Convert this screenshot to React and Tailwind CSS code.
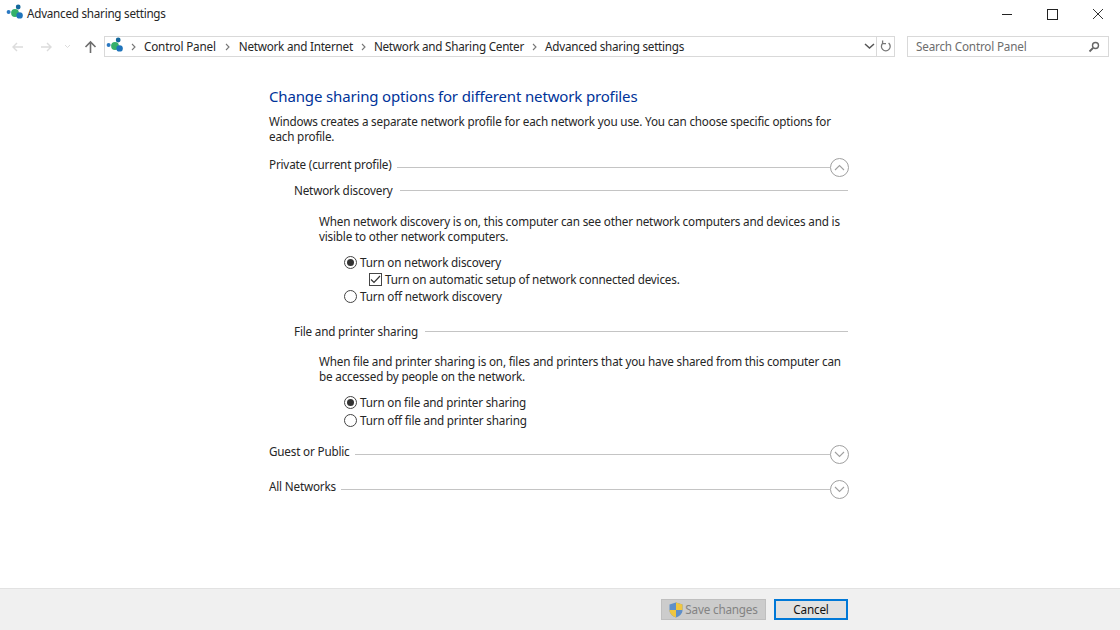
import React from "react";

const Net = ({ className = "" }) => (
  <svg width="18" height="16" viewBox="0 0 18 16" className={className}>
    <circle cx="2.6" cy="8" r="2" fill="#2a78c2" />
    <circle cx="9" cy="9" r="3.9" fill="#35b06a" />
    <circle cx="12.2" cy="3" r="2.4" fill="#14689c" />
    <circle cx="13.6" cy="11.4" r="3.2" fill="#1f74bb" />
  </svg>
);

const Chevron = ({ up }) => (
  <span className="w-[19px] h-[19px] shrink-0 rounded-full border border-[#a0a0a0] flex items-center justify-center bg-white">
    <svg width="11" height="7" viewBox="0 0 11 7">
      <path d={up ? "M1 6 L5.5 1.5 L10 6" : "M1 1 L5.5 5.5 L10 1"} stroke="#a0a0a0" strokeWidth="1.1" fill="none" />
    </svg>
  </span>
);

const Head = ({ children, up }) => (
  <div className="flex items-center h-[19px]">
    <span className="-mt-[7px] whitespace-nowrap">{children}</span>
    <span className="flex-1 h-px bg-[#c4c4c4] ml-[5px]" />
    <Chevron up={up} />
  </div>
);

const Sub = ({ children }) => (
  <div className="flex items-center h-[16px] ml-[25px]">
    <span className="whitespace-nowrap">{children}</span>
    <span className="flex-1 h-px bg-[#c4c4c4] ml-[7px] mr-px" />
  </div>
);

const Radio = ({ on, children, className = "" }) => (
  <div className={`flex items-center h-[17px] ml-[75px] ${className}`}>
    <span className="w-[13px] h-[13px] rounded-full border border-[#444] flex items-center justify-center mr-[3px] bg-white">
      {on && <span className="w-[7px] h-[7px] rounded-full bg-[#333]" />}
    </span>
    <span className="whitespace-nowrap">{children}</span>
  </div>
);

const Crumb = ({ children, className = "mx-[8px]" }) => (
  <>
    <svg width="5" height="8" viewBox="0 0 5 8" className={`shrink-0 ${className}`}>
      <path d="M1 1 L4 4 L1 7" stroke="#777" strokeWidth="1.1" fill="none" />
    </svg>
    <span className="whitespace-nowrap tracking-[-0.24px]">{children}</span>
  </>
);

export default function App() {
  return (
    <div className="w-[1120px] h-[630px] overflow-hidden bg-white flex flex-col text-[11.7px] leading-[15px] text-[#262626] font-['Noto_Sans',sans-serif] tracking-[-0.18px]">
      {/* Title bar */}
      <div className="h-[28px] flex items-center shrink-0">
        <Net className="ml-[6px] -mt-[4px]" />
        <span className="ml-[3px] -mt-px tracking-[-0.26px]">Advanced sharing settings</span>
        <div className="ml-auto flex items-center">
          <span className="w-[10px] h-px bg-[#222] mr-[35px]" />
          <span className="w-[11px] h-[11px] border border-[#222] mr-[34px]" />
          <svg width="12" height="12" viewBox="0 0 12 12" className="mr-[16px]">
            <path d="M1 1 L11 11 M11 1 L1 11" stroke="#333" strokeWidth="1" />
          </svg>
        </div>
      </div>

      {/* Address row */}
      <div className="h-[21px] mt-[8px] flex items-center shrink-0">
        <div className="w-[104px] flex items-center shrink-0 pl-[11px]">
          <svg width="13" height="12" viewBox="0 0 13 12"><path d="M12 6 H2 M6 2 L2 6 L6 10" stroke="#dcdcdc" strokeWidth="1.4" fill="none" /></svg>
          <svg width="13" height="12" viewBox="0 0 13 12" className="ml-[16px]"><path d="M1 6 H11 M7 2 L11 6 L7 10" stroke="#dcdcdc" strokeWidth="1.4" fill="none" /></svg>
          <svg width="7" height="5" viewBox="0 0 7 5" className="ml-[11px]"><path d="M1 1 L3.5 3.5 L6 1" stroke="#dcdcdc" strokeWidth="1" fill="none" /></svg>
          <svg width="13" height="14" viewBox="0 0 13 14" className="ml-[13px]"><path d="M6.5 13 V2 M1.5 7 L6.5 2 L11.5 7" stroke="#6d6d6d" strokeWidth="1.6" fill="none" /></svg>
        </div>
        <div className="w-[791px] h-[21px] border border-[#d9d9d9] flex items-center shrink-0">
          <Net className="ml-[1px] -mt-[4px]" />
          <svg width="5" height="8" viewBox="0 0 5 8" className="ml-[7px] mr-[8px]"><path d="M1 1 L4 4 L1 7" stroke="#777" strokeWidth="1.1" fill="none" /></svg>
          <span className="whitespace-nowrap">Control Panel</span>
          <Crumb className="ml-[9px] mr-[9px]">Network and Internet</Crumb>
          <Crumb>Network and Sharing Center</Crumb>
          <Crumb>Advanced sharing settings</Crumb>
          <svg width="11" height="7" viewBox="0 0 11 7" className="ml-auto mr-[1px]"><path d="M1 1 L5.5 5 L10 1" stroke="#555" strokeWidth="1.5" fill="none" /></svg>
          <span className="w-px h-[19px] bg-[#d9d9d9]" />
          <svg width="12" height="13" viewBox="0 0 12 13" className="ml-[3px] mr-[2px]">
            <path d="M8.6 3 A4.4 4.4 0 1 1 3 3 M2.6 .6 V3.6 H6" stroke="#777" strokeWidth="1.3" fill="none" />
          </svg>
        </div>
        <div className="w-[202px] h-[21px] ml-[12px] border border-[#d9d9d9] flex items-center pl-[8px] text-[#6d6d6d] shrink-0">
          <span>Search Control Panel</span>
          <svg width="12" height="12" viewBox="0 0 12 12" className="ml-auto mr-[8px]">
            <circle cx="7.5" cy="4.5" r="3" stroke="#666" strokeWidth="1.4" fill="none" />
            <path d="M5 7 L1.5 10.5" stroke="#666" strokeWidth="1.8" />
          </svg>
        </div>
      </div>

      {/* Main */}
      <div className="flex-1 pl-[269px] pt-[29px]">
        <div className="w-[580px]">
          <h1 className="text-[15px] leading-[20px] text-[#003399] font-normal tracking-[-0.15px]">Change sharing options for different network profiles</h1>
          <p className="mt-[8px] w-[570px]">Windows creates a separate network profile for each network you use. You can choose specific options for each profile.</p>

          <div className="mt-[14px]"><Head up>Private (current profile)</Head></div>
          <div className="mt-[5px]"><Sub>Network discovery</Sub></div>
          <p className="mt-[16px] ml-[50px] w-[525px]">When network discovery is on, this computer can see other network computers and devices and is visible to other network computers.</p>
          <Radio on className="mt-[10px]">Turn on network discovery</Radio>
          <div className="flex items-center h-[17px] ml-[100px]">
            <span className="w-[13px] h-[13px] border border-[#444] flex items-center justify-center mr-[3px]">
              <svg width="11" height="9" viewBox="0 0 11 9"><path d="M1 4.5 L4 7.5 L10 1" stroke="#333" strokeWidth="1.2" fill="none" /></svg>
            </span>
            <span className="whitespace-nowrap">Turn on automatic setup of network connected devices.</span>
          </div>
          <Radio>Turn off network discovery</Radio>

          <div className="mt-[18px]"><Sub>File and printer sharing</Sub></div>
          <p className="mt-[15px] ml-[50px] w-[525px]">When file and printer sharing is on, files and printers that you have shared from this computer can be accessed by people on the network.</p>
          <Radio on className="mt-[10px]">Turn on file and printer sharing</Radio>
          <Radio className="mt-px">Turn off file and printer sharing</Radio>

          <div className="mt-[16px]"><Head>Guest or Public</Head></div>
          <div className="mt-[16px]"><Head>All Networks</Head></div>
        </div>
      </div>

      {/* Footer */}
      <div className="h-[42px] shrink-0 border-t border-[#e2e2e2] bg-[#f0f0f0] flex items-start justify-end pt-[10px] pr-[272px]">
        <div className="w-[105px] h-[21px] bg-[#cccccc] border border-[#bfbfbf] flex items-center justify-center text-[#838383]">
          <svg width="14" height="16" viewBox="0 0 14 16" className="mr-[2px]">
            <path d="M7 .5 L13.5 2.5 V8 C13.5 12 10 14.5 7 15.5 C4 14.5 .5 12 .5 8 V2.5 Z" fill="#5f8fc9" />
            <path d="M7 .5 L13.5 2.5 V8 H7 Z" fill="#f0c640" />
            <path d="M7 8 H.5 C.5 12 4 14.5 7 15.5 Z" fill="#f0c640" />
          </svg>
          <span>Save changes</span>
        </div>
        <div className="w-[74px] h-[21px] ml-[8px] bg-[#e1e1e1] border-2 border-[#0078d7] flex items-center justify-center text-[#111]">Cancel</div>
      </div>
    </div>
  );
}
